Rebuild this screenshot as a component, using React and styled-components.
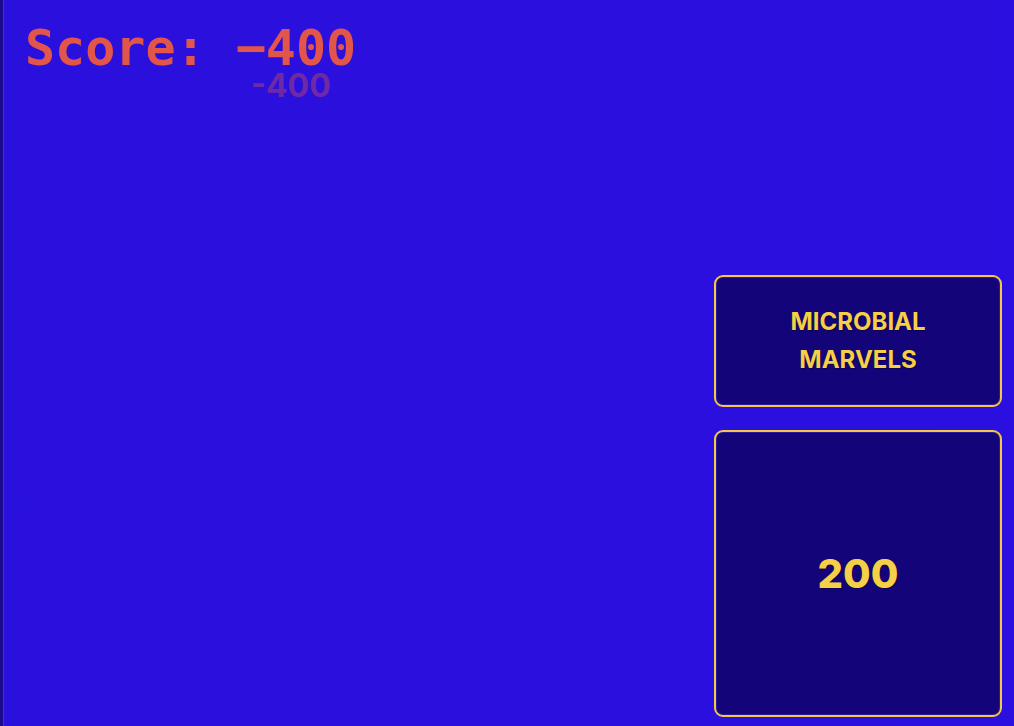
import React from "react";
import styled, { createGlobalStyle } from "styled-components";

const Global = createGlobalStyle`
  html, body {
    margin: 0;
    padding: 0;
    background: #2b0fe0;
  }
  #root {
    height: 726px;
  }
`;

export default function App() {
  return (
    <>
      <Global />
      <Board>
        <ScoreArea>
          <Score>Score: −400</Score>
          <Delta>-400</Delta>
        </ScoreArea>
        <Column>
          <Card $height={132}>
            <Category>
              MICROBIAL
              <br />
              MARVELS
            </Category>
          </Card>
          <Card $height={287}>
            <Value>200</Value>
          </Card>
        </Column>
      </Board>
    </>
  );
}

const Board = styled.div`
  display: flex;
  justify-content: space-between;
  height: 726px;
  box-sizing: border-box;
  background: linear-gradient(90deg, #2a10dc 0%, #2b0fe0 100%);
  border-left: 3px solid #1b0a8c;
  box-shadow: inset 1px 0 0 #3a2cf0;
`;

const ScoreArea = styled.div`
  position: relative;
  padding: 26px 0 0 22px;
`;

const Score = styled.h1`
  margin: 0;
  font-family: "DejaVu Sans Mono", "Liberation Mono", monospace;
  font-weight: bold;
  font-size: 50px;
  line-height: 0.9;
  color: #e2554a;
  white-space: nowrap;
`;

const Delta = styled.span`
  position: absolute;
  left: 248px;
  top: 72px;
  font-family: Inter, "Noto Sans", sans-serif;
  font-weight: 700;
  font-size: 32px;
  line-height: 0.85;
  color: rgba(226, 85, 74, 0.38);
`;

const Column = styled.div`
  display: flex;
  flex-direction: column;
  justify-content: flex-end;
  gap: 23px;
  width: 288px;
  padding: 0 12px 9px 0;
`;

const Card = styled.div`
  height: ${(p) => p.$height}px;
  box-sizing: border-box;
  display: flex;
  align-items: center;
  justify-content: center;
  background: #140479;
  border: 2px solid #f3c845;
  border-radius: 9px;
  box-shadow: inset 0 0 0 1px #2a1a9a;
`;

const Category = styled.div`
  font-family: Inter, "Noto Sans", sans-serif;
  font-weight: 700;
  font-size: 24px;
  line-height: 38px;
  text-align: center;
  color: #f5cf45;
  text-shadow: 1px 1px 1px rgba(0, 0, 0, 0.35);
`;

const Value = styled.div`
  font-family: Inter, "Noto Sans", sans-serif;
  font-weight: 800;
  font-size: 40px;
  color: #f5cf45;
  text-shadow: 1px 1px 1px rgba(0, 0, 0, 0.35);
`;
